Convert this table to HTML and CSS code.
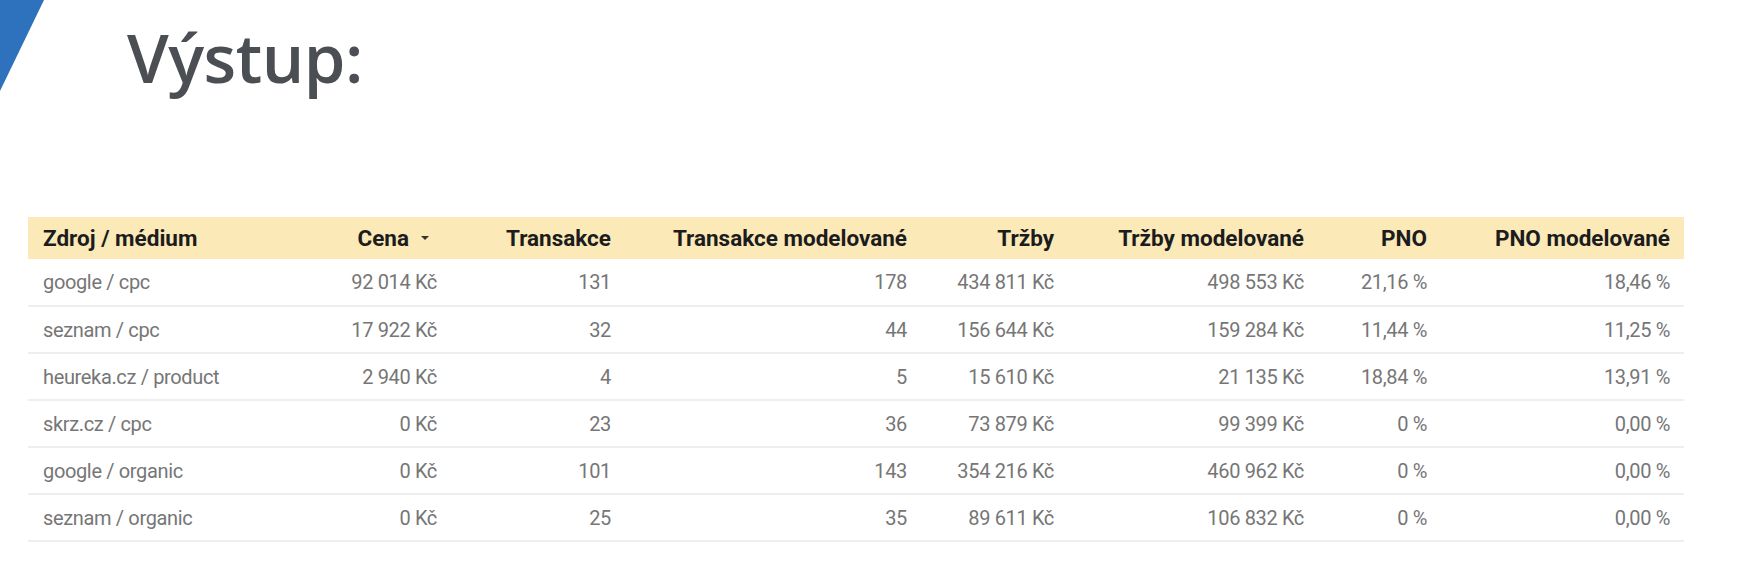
FILE: index.html
```html
<!DOCTYPE html>
<html lang="cs">
<head>
<meta charset="utf-8">
<title>Výstup</title>
<link rel="stylesheet" href="styles.css">
</head>
<body>
<header class="top">
  <svg class="corner" width="44" height="91" viewBox="0 0 44 91" aria-hidden="true"><polygon points="0,0 44,0 0,91" fill="#2e71bd"/></svg>
  <h1 class="title">Výstup:</h1>
</header>
<main class="report">
  <table class="grid">
    <colgroup>
      <col class="c1"><col class="c2"><col class="c3"><col class="c4"><col class="c5"><col class="c6"><col class="c7"><col class="c8">
    </colgroup>
    <thead>
      <tr>
        <th class="left">Zdroj / médium</th>
        <th><span class="sort">Cena<span class="arrow"></span></span></th>
        <th>Transakce</th>
        <th>Transakce modelované</th>
        <th>Tržby</th>
        <th>Tržby modelované</th>
        <th>PNO</th>
        <th>PNO modelované</th>
      </tr>
    </thead>
    <tbody>
      <tr><td class="left">google / cpc</td><td>92 014 Kč</td><td>131</td><td>178</td><td>434 811 Kč</td><td>498 553 Kč</td><td>21,16 %</td><td>18,46 %</td></tr>
      <tr><td class="left">seznam / cpc</td><td>17 922 Kč</td><td>32</td><td>44</td><td>156 644 Kč</td><td>159 284 Kč</td><td>11,44 %</td><td>11,25 %</td></tr>
      <tr><td class="left">heureka.cz / product</td><td>2 940 Kč</td><td>4</td><td>5</td><td>15 610 Kč</td><td>21 135 Kč</td><td>18,84 %</td><td>13,91 %</td></tr>
      <tr><td class="left">skrz.cz / cpc</td><td>0 Kč</td><td>23</td><td>36</td><td>73 879 Kč</td><td>99 399 Kč</td><td>0 %</td><td>0,00 %</td></tr>
      <tr><td class="left">google / organic</td><td>0 Kč</td><td>101</td><td>143</td><td>354 216 Kč</td><td>460 962 Kč</td><td>0 %</td><td>0,00 %</td></tr>
      <tr><td class="left">seznam / organic</td><td>0 Kč</td><td>25</td><td>35</td><td>89 611 Kč</td><td>106 832 Kč</td><td>0 %</td><td>0,00 %</td></tr>
    </tbody>
  </table>
</main>
</body>
</html>
```

FILE: styles.css
```css
html, body {
  margin: 0;
  padding: 0;
  background: #ffffff;
}

body {
  width: 1758px;
  height: 568px;
  overflow: hidden;
  font-family: Roboto, "Liberation Sans", sans-serif;
}

.top {
  display: flex;
  align-items: flex-start;
}

.corner {
  display: block;
  flex: 0 0 auto;
}

.title {
  margin: 24px 0 0 83px;
  font-family: "Open Sans", "DejaVu Sans", sans-serif;
  font-weight: 600;
  font-size: 67px;
  line-height: 67px;
  color: #4b4e53;
  letter-spacing: -0.5px;
}

.report {
  padding: 126px 0 0 28px;
}

.grid {
  table-layout: fixed;
  width: 1656px;
  border-collapse: collapse;
  border-spacing: 0;
}

.c1 { width: 280px; }
.c2 { width: 143px; }
.c3 { width: 174px; }
.c4 { width: 296px; }
.c5 { width: 147px; }
.c6 { width: 250px; }
.c7 { width: 123px; }
.c8 { width: 243px; }

.grid th {
  height: 42px;
  padding: 0 14px 0 15px;
  background: #fbe9b8;
  color: #1c1c1c;
  font-weight: 700;
  font-size: 22.5px;
  text-align: right;
  white-space: nowrap;
  box-sizing: border-box;
}

.grid td {
  height: 47px;
  padding: 0 14px 0 15px;
  color: #767676;
  font-size: 20px;
  text-align: right;
  white-space: nowrap;
  border-bottom: 2px solid #eeeeee;
  box-sizing: border-box;
  letter-spacing: -0.35px;
}

.grid .left {
  text-align: left;
}

.sort {
  display: inline-flex;
  align-items: center;
  gap: 12px;
  margin-right: 8px;
}

.arrow {
  width: 0;
  height: 0;
  border-left: 4px solid transparent;
  border-right: 4px solid transparent;
  border-top: 4px solid #333333;
}
```
